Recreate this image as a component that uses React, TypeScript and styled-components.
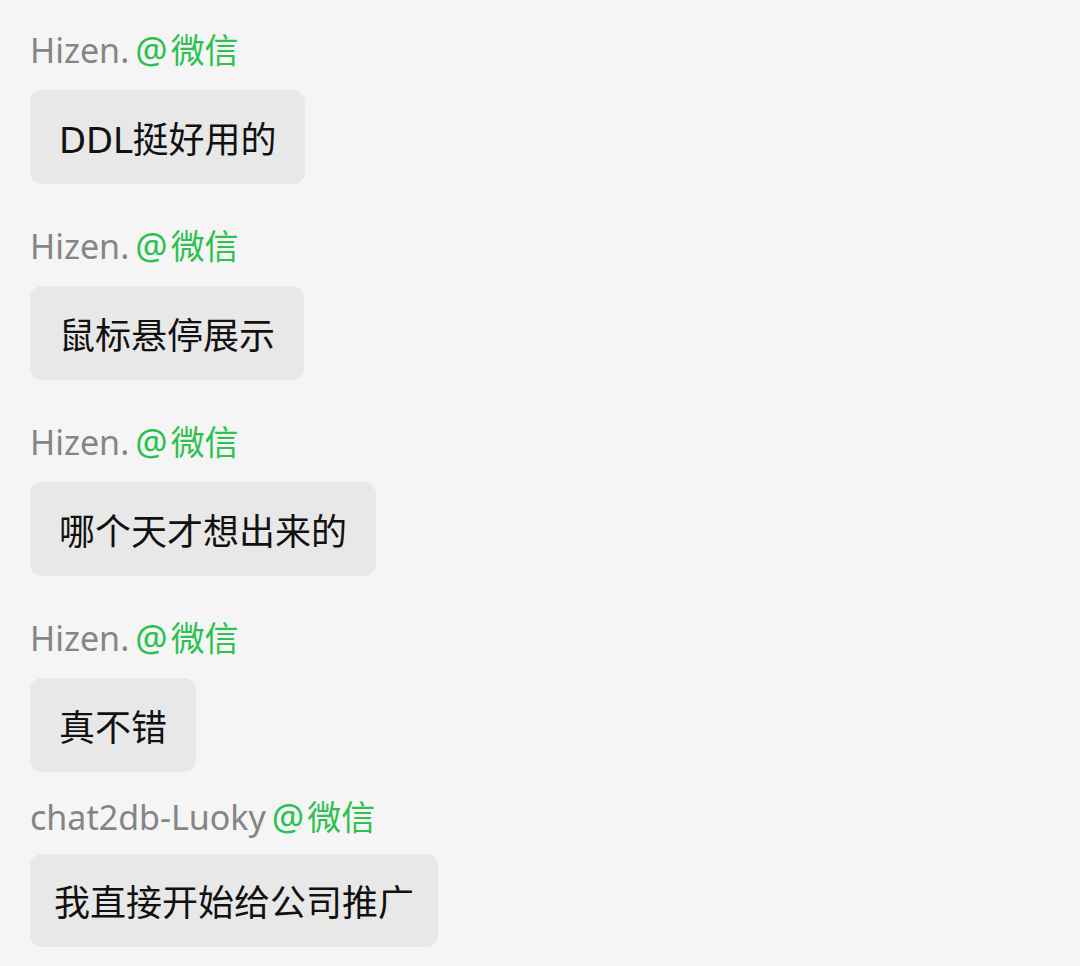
import React from 'react';
import styled, { createGlobalStyle } from 'styled-components';

const GlobalStyle = createGlobalStyle`
    html, body {
        margin: 0;
        padding: 0;
        background: #f5f5f5;
    }
    body {
        font-family: "Noto Sans", "Noto Sans CJK SC", sans-serif;
    }
`;

const Page = styled.div`
    width: 1080px;
    height: 966px;
    box-sizing: border-box;
    padding: 30px 0 0 30px;
    background: #f5f5f5;
    overflow: hidden;
`;

const Message = styled.div<{ $compact?: boolean }>`
    display: flex;
    flex-direction: column;
    align-items: flex-start;
    gap: ${p => (p.$compact ? '17px' : '20px')};
    margin-bottom: ${p => (p.$compact ? '0' : '42px')};
    margin-top: ${p => (p.$compact ? '-17px' : '0')};
`;

const Name = styled.div`
    display: flex;
    align-items: center;
    height: 40px;
    font-size: 34px;
    line-height: 40px;
    color: #858585;
    white-space: nowrap;
`;

const Source = styled.span`
    color: #2dc24f;
    margin-left: 6px;
    font-size: 36px;
`;

const Channel = styled.span`
    margin-left: 3px;
    font-size: 34px;
`;

const Bubble = styled.div<{ $compact?: boolean }>`
    background: #e8e8e8;
    border-radius: 12px;
    color: #111;
    font-family: "Noto Sans CJK SC", sans-serif;
    font-size: 36px;
    line-height: ${p => (p.$compact ? '49px' : '50px')};
    padding: ${p => (p.$compact ? '22px 24px' : '22px 29px')};
    white-space: nowrap;
`;

const Latin = styled.span`
    font-family: "DejaVu Sans", sans-serif;
    font-size: 35px;
    line-height: 1;
`;

const MESSAGES = [
    { name: 'Hizen.', prefix: 'DDL', text: '挺好用的' },
    { name: 'Hizen.', text: '鼠标悬停展示' },
    { name: 'Hizen.', text: '哪个天才想出来的' },
    { name: 'Hizen.', text: '真不错' },
    { name: 'chat2db-Luoky', text: '我直接开始给公司推广', last: true },
];

const App = () => {
    return (
        <>
            <GlobalStyle />
            <Page>
                {MESSAGES.map((msg, index) => (
                    <Message key={index} $compact={msg.last}>
                        <Name>
                            {msg.name}
                            <Source>
                                @<Channel>微信</Channel>
                            </Source>
                        </Name>
                        <Bubble $compact={msg.last}>
                            {msg.prefix && <Latin>{msg.prefix}</Latin>}
                            {msg.text}
                        </Bubble>
                    </Message>
                ))}
            </Page>
        </>
    );
};

export default App;
